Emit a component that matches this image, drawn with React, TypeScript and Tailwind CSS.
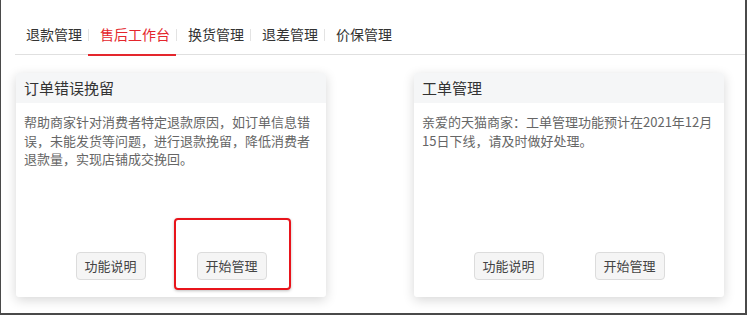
import React from "react";

const font = { fontFamily: '"Noto Sans CJK SC", "Noto Sans", sans-serif' };

const tabs = ["退款管理", "售后工作台", "换货管理", "退差管理", "价保管理"];

function Card({ title, text, highlight }: { title: string; text: React.ReactNode; highlight?: boolean }) {
  return (
    <div className="relative w-[310px] h-[224px] bg-white rounded-[3px] shadow-[0_3px_12px_rgba(0,0,0,0.16)] flex flex-col">
      <div className="h-[30px] bg-[#f5f6f7] rounded-t-[3px] flex items-center px-2 text-[15px] text-[#333]">{title}</div>
      <div className="flex-1 px-2 pt-[10px] text-[13px] leading-[18.5px] text-[#666]">{text}</div>
      <div className="flex justify-center gap-[51px] pb-[17px]">
        <button className="w-[70px] h-[28px] bg-[#f5f5f5] border border-[#dcdcdc] rounded-[4px] text-[13px] text-[#444]">功能说明</button>
        <button className="w-[70px] h-[28px] bg-[#f5f5f5] border border-[#dcdcdc] rounded-[4px] text-[13px] text-[#444]">开始管理</button>
      </div>
      {highlight && (
        <div className="absolute left-[158px] top-[145px] w-[117px] h-[72px] border-2 border-[#e8141b] rounded-[4px] shadow-[0_1px_3px_rgba(0,0,0,0.25)]" />
      )}
    </div>
  );
}

export default function App() {
  return (
    <div style={font} className="w-[747px] h-[315px] bg-white border-l border-r-2 border-b-2 border-[#4a4a4a] overflow-hidden">
      <div className="ml-[14px] pt-[15px] flex border-b border-[#e0e0e0]">
        {tabs.map((t, i) => (
          <React.Fragment key={t}>
            {i > 0 && <div className="w-px h-[12px] bg-[#e3e3e3] self-center" />}
            <div
              className={
                "relative h-[39px] pl-[11px] pr-[6px] flex items-center text-[14px] " +
                (i === 1 ? "text-[#e4262d]" : "text-[#333]")
              }
            >
              {t}
              {i === 1 && <div className="absolute left-[-1px] right-0 bottom-[-2px] h-[2px] bg-[#e4262d]" />}
            </div>
          </React.Fragment>
        ))}
      </div>
      <div className="flex gap-[88px] pl-[15px] pt-[18px]">
        <Card
          title="订单错误挽留"
          highlight
          text="帮助商家针对消费者特定退款原因，如订单信息错误，未能发货等问题，进行退款挽留，降低消费者退款量，实现店铺成交挽回。"
        />
        <Card title="工单管理" text="亲爱的天猫商家：工单管理功能预计在2021年12月15日下线，请及时做好处理。" />
      </div>
    </div>
  );
}
